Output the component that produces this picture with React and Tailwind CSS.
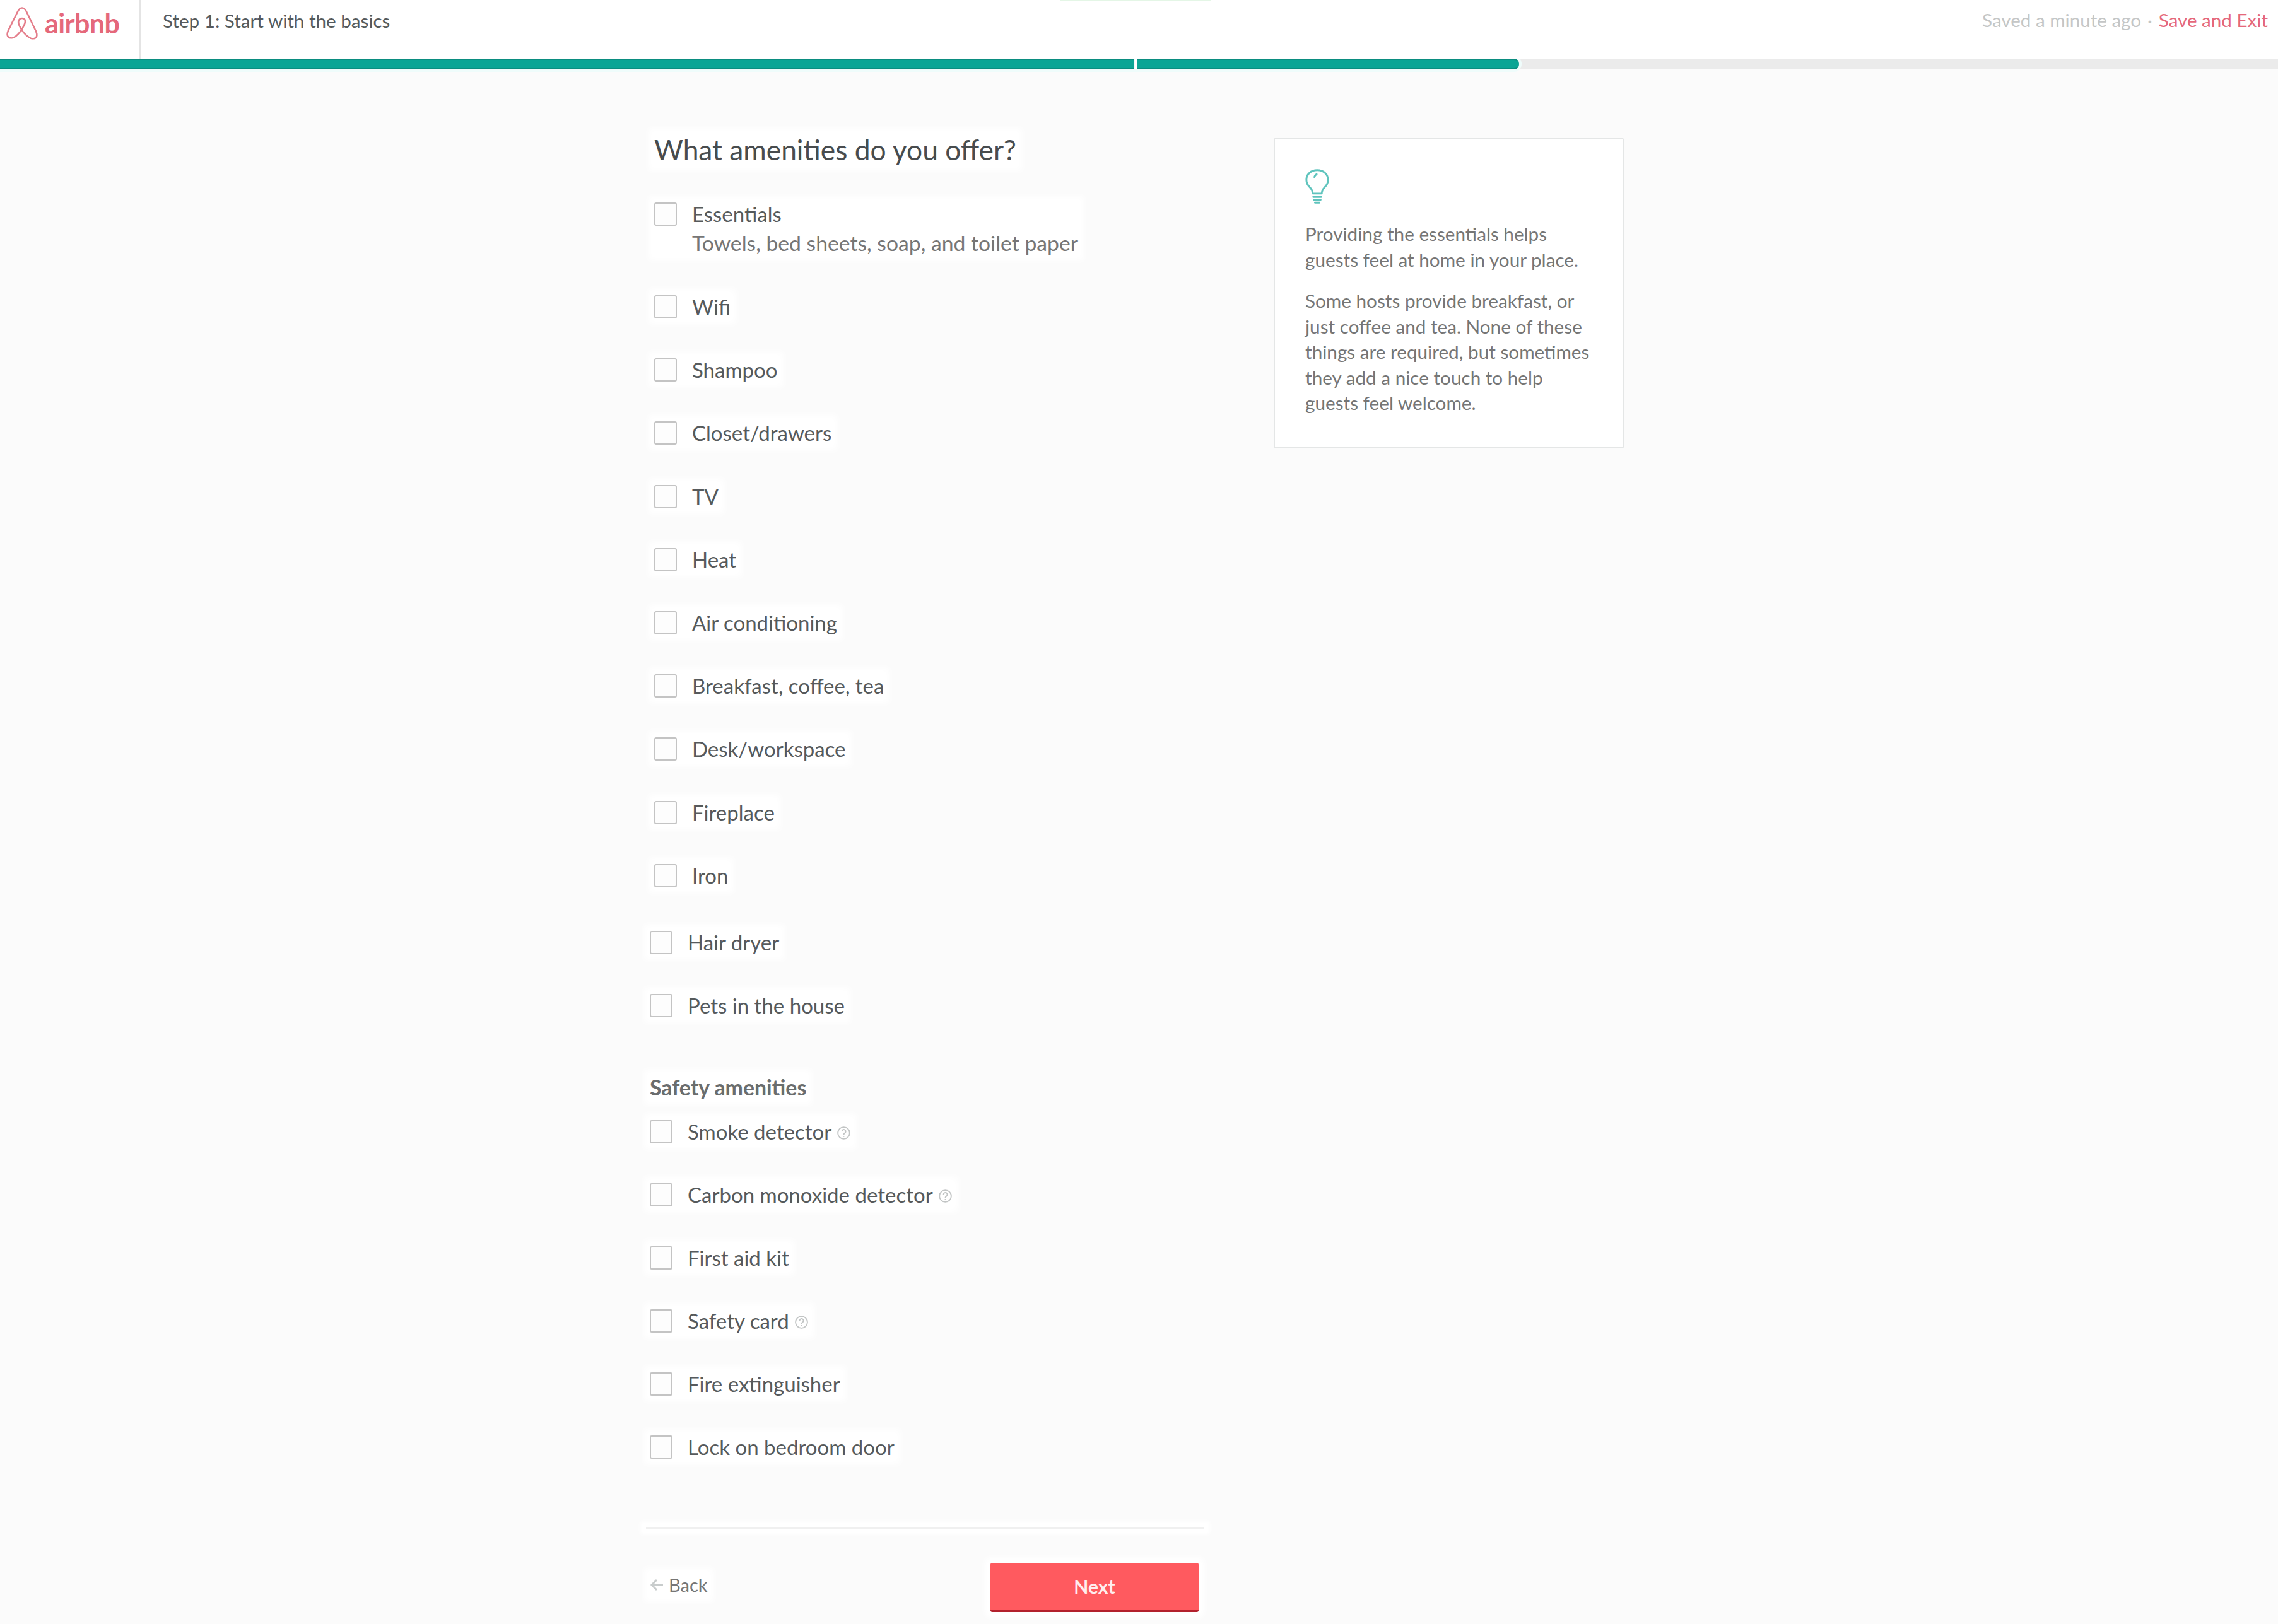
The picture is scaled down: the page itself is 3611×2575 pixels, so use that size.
const font = { fontFamily: 'Lato, "Open Sans", sans-serif' };

function Help() {
  return (
    <svg width="23" height="23" viewBox="0 0 22 22" className="ml-[8px] mt-[6px] shrink-0" fill="none" stroke="#c2c5c5" strokeWidth="1.8">
      <circle cx="11" cy="11" r="9" />
      <path d="M8.2 8.6a2.9 2.9 0 1 1 4.4 2.5c-1 .6-1.6 1.1-1.6 2.3M11 15.4v1.6" />
    </svg>
  );
}

function Row({ label, help, sub, className = "" }) {
  return (
    <div className={`flex w-fit items-start bg-white shadow-[0_0_10px_9px_#ffffff] ${className}`}>
      <span className="mt-[1px] h-[37px] w-[36px] shrink-0 rounded-[3px] border-2 border-[#c4c4c4] bg-[#fdfdfd]" />
      <div className="ml-[24px]">
        <div className="flex h-[38px] items-center text-[33px] leading-[38px] text-[#565a5c]">
          <span>{label}</span>
          {help && <Help />}
        </div>
        {sub && <div className="mt-[8px] text-[33.7px] leading-[38px] text-[#767676]">{sub}</div>}
      </div>
    </div>
  );
}

const first = [
  "Wifi", "Shampoo", "Closet/drawers", "TV", "Heat", "Air conditioning",
  "Breakfast, coffee, tea", "Desk/workspace", "Fireplace", "Iron",
];
const more = ["Hair dryer", "Pets in the house"];
const safety = [
  ["Smoke detector", true], ["Carbon monoxide detector", true], ["First aid kit", false],
  ["Safety card", true], ["Fire extinguisher", false], ["Lock on bedroom door", false],
];

export default function App() {
  return (
    <div style={font} className="relative h-[2575px] w-[3611px] overflow-hidden bg-[#fbfbfb]">
      <header className="relative flex h-[93px] items-start bg-white">
        <div className="absolute left-[1680px] top-0 h-[2px] w-[240px] bg-[#e4f6e6]" />
        <div className="flex h-[93px] w-[223px] shrink-0 items-start border-r-2 border-[#e4e4e4] pl-[8px] pt-[9px]">
          <svg width="54" height="55" viewBox="0 0 54 54" fill="none" stroke="#e47d8a" strokeWidth="2.6" className="shrink-0">
            <path d="M27 3c-3 0-5 2-7 6L5 39c-2 5-2 8 0 10 3 3 8 2 12-1 5-4 10-11 13-17 2-4 3-7 1-10-2-2-6-2-8 0-3 3-2 7 0 11 3 6 8 13 14 17 4 3 9 4 12 1 2-2 2-5 0-10L34 9c-2-4-4-6-7-6Z" />
          </svg>
          <span className="ml-[9px] mt-[6px] text-[43px] font-bold leading-[44px] tracking-[-0.6px] text-[#e5687b]">airbnb</span>
        </div>
        <div className="ml-[35px] mt-[15px] text-[29.6px] leading-[36px] text-[#555a5c]">Step 1: Start with the basics</div>
        <div className="absolute right-[16px] top-[14px] flex text-[29.6px] leading-[36px]">
          <span className="text-[#c4c6c6]">Saved a minute ago</span>
          <span className="mx-[10px] text-[#c4c6c6]">·</span>
          <span className="text-[#e5687b]">Save and Exit</span>
        </div>
      </header>

      <div className="flex h-[17px] bg-[#ebebeb]">
        <div className="h-full w-[1799px] border-y-2 border-[#0b8d80] bg-[#0aa595] shadow-[0_0_0_4px_#effcfb]" />
        <div className="z-10 h-full w-[3px] bg-white" />
        <div className="h-full w-[606px] rounded-r-[8px] border-y-2 border-[#0b8d80] bg-[#0aa595] shadow-[0_0_0_4px_#effcfb]" />
      </div>

      <main className="flex items-start pl-[1030px]">
        <div className="w-[870px] shrink-0">
          <div className="pl-[7px]">
            <h1 className="mt-[102px] w-fit bg-white text-[44.3px] font-normal leading-[50px] text-[#484c4e] shadow-[0_0_10px_9px_#ffffff]">What amenities do you offer?</h1>
            <Row className="mt-[58px]" label="Essentials" sub="Towels, bed sheets, soap, and toilet paper" />
            <div className="mt-[63px] flex flex-col gap-[62.2px]">
              {first.map((r) => <Row key={r} label={r} />)}
            </div>
          </div>
          <div className="mt-[68px] flex flex-col gap-[62.2px]">
            {more.map((r) => <Row key={r} label={r} />)}
          </div>
          <h2 className="mt-[92px] w-fit bg-white text-[33.8px] font-bold leading-[38px] text-[#6a6d6e] shadow-[0_0_10px_9px_#ffffff]">Safety amenities</h2>
          <div className="mt-[32px] flex flex-col gap-[62px]">
            {safety.map(([r, h]) => <Row key={r} label={r} help={h} />)}
          </div>
          <div className="ml-[-6px] mt-[108px] h-[3px] w-[885px] bg-[#f0f0f0] shadow-[0_0_6px_9px_#ffffff]" />
          <div className="mt-[54px] flex items-center justify-between">
            <div className="mt-[-8px] flex items-center bg-white text-[29px] leading-[36px] text-[#767676] shadow-[0_0_10px_9px_#ffffff]">
              <svg width="24" height="22" viewBox="0 0 24 22" fill="none" stroke="#c8cccc" strokeWidth="3" className="mr-[6px]">
                <path d="M11 3 3 11l8 8M3 11h18" />
              </svg>
              <span>Back</span>
            </div>
            <button className="flex h-[78px] w-[330px] items-center justify-center rounded-[3px] border-b-[3px] border-[#b3212d] bg-[#ff5a5f] text-[30px] font-bold text-[#ffeeee] shadow-[0_0_10px_9px_#ffffff]">
              Next
            </button>
          </div>
        </div>

        <aside className="ml-[119px] mt-[109px] h-[492px] w-[555px] shrink-0 rounded-[2px] border-2 border-[#e4e6e6] bg-white pl-[48px] pr-[30px] pt-[47px] text-[29.7px] leading-[40.5px] text-[#767676]">
          <svg width="40" height="56" viewBox="0 0 44 62" fill="none" stroke="#5fc4bd" strokeWidth="3.2" strokeLinecap="round" strokeLinejoin="round" className="ml-[-1px]">
            <path d="M22 2C11 2 3 9 3 19c0 5 2 9 6 13 3 3 5 7 5 11h16c0-4 2-8 5-11 4-4 6-8 6-13C41 9 33 2 22 2Z" />
            <path d="M15 49h14M16 54h12M18 59h8M17 14c1-3 2-4 4-5" />
          </svg>
          <p className="mt-[27px]">Providing the essentials helps<br />guests feel at home in your place.</p>
          <p className="mt-[25px]">Some hosts provide breakfast, or<br />just coffee and tea. None of these<br />things are required, but sometimes<br />they add a nice touch to help<br />guests feel welcome.</p>
        </aside>
      </main>
    </div>
  );
}
